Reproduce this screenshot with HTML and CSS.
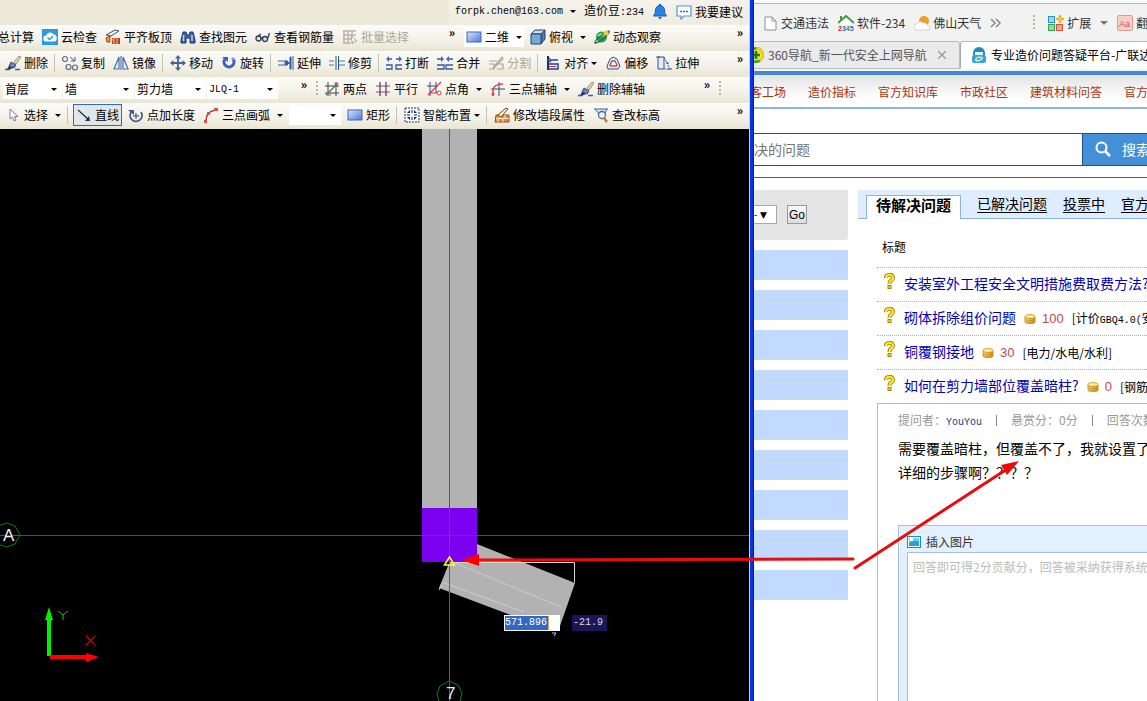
FILE: index.html
```html
<!DOCTYPE html>
<html lang="zh-CN">
<head>
<meta charset="utf-8">
<title>造价问题答疑</title>
<link rel="stylesheet" href="styles.css">
</head>
<body>
<svg class="defs" aria-hidden="true">
  <defs>
    <linearGradient id="gBlue" x1="0" y1="0" x2="1" y2="1"><stop offset="0" stop-color="#dbe8ff"/><stop offset="1" stop-color="#4a78d8"/></linearGradient>
    <linearGradient id="gGold" x1="0" y1="0" x2="1" y2="0"><stop offset="0" stop-color="#fbe38a"/><stop offset="1" stop-color="#d08a10"/></linearGradient>
  </defs>
  <symbol id="cloud" viewBox="0 0 16 16"><rect width="16" height="16" fill="#2a9be0"/><path d="M4.5 12.5a3 3 0 0 1-.3-6 4 4 0 0 1 7.4-.9 3.5 3.5 0 0 1 .4 6.9z" fill="#fff"/><path d="M5.500 8.500l2 2 3.500-3.500" fill="none" stroke="#2a9be0" stroke-width="1.500"/></symbol>
  <symbol id="slab" viewBox="0 0 16 16"><path d="M1 6l9-5 4 1-8 5z" fill="#e8eefc" stroke="#3a5488"/><path d="M1 9l4-2v6H2z" fill="#f0a030" stroke="#8a4a10"/><path d="M7 9h8v6H7z" fill="#b84020"/><path d="M9 9v6M12 9v6M5 11h3" stroke="#ffd080"/></symbol>
  <symbol id="binoc" viewBox="0 0 16 16"><path d="M3 3h3l1 3h2l1-3h3l2 8v3h-5v-5H6v5H1v-3z" fill="#3c62a8" stroke="#1d3768"/><path d="M3.500 6v6M12 6v6" stroke="#b8d0f8" stroke-width="1.500"/></symbol>
  <symbol id="glasses" viewBox="0 0 16 16"><g fill="#dbe6f5" stroke="#333d50" stroke-width="1.300"><circle cx="3.500" cy="9.500" r="2.500"/><circle cx="10" cy="10" r="2.500"/></g><path d="M6 9l2 .5M3 7l3-2M12.500 10l2-6" stroke="#333d50" stroke-width="1.300" fill="none"/></symbol>
  <symbol id="batch" viewBox="0 0 16 16"><path d="M1 2h13M1 6h13M1 10h8M1 14h8M2 1v14M6 1v14M10 1v7" stroke="#b9b6a9" stroke-width="1.400"/><path d="M9 7l6 5-3 .5-1.500 2.500z" fill="#fff" stroke="#a9a698"/></symbol>
  <symbol id="rect" viewBox="0 0 16 16"><rect x="1" y="3" width="14" height="10" fill="url(#gBlue)" stroke="#4068c0"/></symbol>
  <symbol id="cube" viewBox="0 0 16 16"><path d="M1 5l4-4h10l-4 4z" fill="#c2daf2" stroke="#24456f"/><path d="M11 5l4-4v9l-4 5z" fill="#4a7cae" stroke="#24456f"/><path d="M1 5h10v10H1z" fill="#79a8d6" stroke="#24456f"/></symbol>
  <symbol id="orbit" viewBox="0 0 16 16"><circle cx="7.500" cy="8" r="5.500" fill="#22a050"/><path d="M3 7q4-6 8 0-4 1-8 0" fill="#8ce090"/><path d="M1 14Q0 11 14 2q3 0-1 4Q5 14 1 14z" fill="none" stroke="#2b6e48" stroke-width="1.300"/><circle cx="12" cy="4" r="2.500" fill="#f2c840"/></symbol>
  <symbol id="brush" viewBox="0 0 16 16"><path d="M9 7l5-6 2 1-5 7z" fill="#e5d8b8" stroke="#776a50" stroke-width=".7"/><path d="M6 7l5 3-2 3-5-2z" fill="#7084c8" stroke="#334480"/><path d="M4 11l4 2q-3 2-6 1z" fill="#303848"/><path d="M0 14.500h5M10 14.500h5" stroke="#3d59a8" stroke-width="1.500"/></symbol>
  <symbol id="copy" viewBox="0 0 16 16"><g fill="none" stroke="#5c6b88" stroke-width="1.200"><circle cx="3" cy="4" r="2.500"/><circle cx="6.500" cy="12" r="2.500"/><circle cx="13" cy="12.500" r="2.500"/></g><path d="M8 2l5 4M13 2v4H9" fill="none" stroke="#385ca0"/></symbol>
  <symbol id="mirror" viewBox="0 0 16 16"><path d="M6 2v12H1zM10 2v12h5z" fill="#e9f1ff" stroke="#426fae" stroke-width="1.200"/><path d="M8 1v14" stroke="#3c6096"/></symbol>
  <symbol id="move" viewBox="0 0 16 16"><path d="M8 1v14M1 8h14" stroke="#48628c" stroke-width="1.800"/><path d="M8 0l3 3.500H5zM8 16l3-3.500H5zM0 8l3.500-3v6zM16 8l-3.500-3v6z" fill="#48628c"/></symbol>
  <symbol id="rotate" viewBox="0 0 16 16"><path d="M4 4a5 5 0 1 0 8 0" fill="none" stroke="#3c62c0" stroke-width="3"/><path d="M1 2h6v5z" fill="#3c62c0"/><path d="M9 4l3-2 3 3" fill="#8aa8ea"/></symbol>
  <symbol id="extend" viewBox="0 0 16 16"><path d="M0 6h7v4H0M7 8h5" fill="none" stroke="#3c5f9c"/><path d="M8 5l3 3-3 3zM12 2h1v12h-1zM15 1v14" fill="#3159a0" stroke="#3159a0"/></symbol>
  <symbol id="trim" viewBox="0 0 16 16"><path d="M0 6h5M0 10h5M10 6h6M10 10h6" stroke="#467bb8"/><path d="M7 1v14M9.500 1v14" stroke="#27559a"/></symbol>
  <symbol id="split" viewBox="0 0 16 16"><path d="M0 10h6v4H0M16 10h-6v4h6M1 4h5M10 4h5" fill="none" stroke="#355a9a" stroke-width="1.300"/><path d="M3 1L0 4l3 3zM13 1l3 3-3 3z" fill="#4169b4"/></symbol>
  <symbol id="merge" viewBox="0 0 16 16"><path d="M0 10h7v4H0M16 10H9v4h7M0 4h5M11 4h5" fill="none" stroke="#355a9a" stroke-width="1.300"/><path d="M4 1l3 3-3 3zM12 1L9 4l3 3z" fill="#4169b4"/></symbol>
  <symbol id="cut" viewBox="0 0 16 16"><path d="M1 6h8M1 9h5v5H1M9 9h6v5H9M5 13L14 2l1 2-8 8z" fill="none" stroke="#aaa79b" stroke-width="1.200"/></symbol>
  <symbol id="align" viewBox="0 0 16 16"><path d="M3 1v14" stroke="#183070" stroke-width="2"/><path d="M5 5h8M5 3l-2 2 3 2" stroke="#26429a" fill="none" stroke-width="1.500"/><path d="M4 9h9v5H4" fill="#dfe8ff" stroke="#26429a" stroke-width="1.500"/><path d="M4 11.500h7" stroke="#e03040"/></symbol>
  <symbol id="offset" viewBox="0 0 16 16"><path d="M2 11l3-7 3-2 4 2 3 7-2 3H3z" fill="#e3eaf7" stroke="#3f5380"/><path d="M5 10l2-4h3l2 4-1 1H6z" fill="#fff" stroke="#c84a58" stroke-width="1.500"/></symbol>
  <symbol id="stretch" viewBox="0 0 16 16"><path d="M2 2h6v12H2z" fill="#e4ecfa" stroke="#37558c"/><path d="M8 2l6 12H8" fill="none" stroke="#37558c" stroke-dasharray="2 1"/><path d="M0 2h4M10 8h3M12 14h4" stroke="#37558c"/></symbol>
  <symbol id="twopt" viewBox="0 0 16 16"><path d="M1 5h14M1 12h14M4 1v14M12 1v14" stroke="#3b4468"/><path d="M2 14L14 2" stroke="#3f8a48" stroke-width="1.500"/><path d="M3 12h3v3M10 3h3v3" fill="none" stroke="#c65a30"/></symbol>
  <symbol id="parallel" viewBox="0 0 16 16"><path d="M1 5h14M1 11h14" stroke="#a84860" stroke-width="1.200"/><path d="M5 1v14M11 1v14" stroke="#39436c" stroke-width="1.200"/></symbol>
  <symbol id="angle" viewBox="0 0 16 16"><path d="M1 5h11M4 1v14M10 1v11" stroke="#3b4a80"/><path d="M2 14L15 1M4 12h9" stroke="#cf3a48" stroke-width="1.200"/><circle cx="13" cy="12" r="2" fill="#fff" stroke="#cf3a48"/></symbol>
  <symbol id="threeaxis" viewBox="0 0 16 16"><path d="M1 8h14M9 1v14" stroke="#344a88"/><path d="M3 15V9q1-6 10-6" fill="none" stroke="#d14448" stroke-width="1.400"/><circle cx="3" cy="13" r="1.500" fill="#d14448"/></symbol>
  <symbol id="cursor" viewBox="0 0 16 16"><path d="M5 2v10l2.500-2 1.500 4 2-1-1.500-3.500H13z" fill="#fff" stroke="#777e90"/></symbol>
  <symbol id="line" viewBox="0 0 16 16"><path d="M2 3l10 9" stroke="#1e2f5e" stroke-width="1.300"/><path d="M14 14H9l4-5z" fill="#1e2f5e"/></symbol>
  <symbol id="ptlen" viewBox="0 0 16 16"><path d="M4 4a6 6 0 1 0 9 1" fill="none" stroke="#40598c" stroke-width="1.700"/><path d="M0 3h6v5z" fill="#40598c"/><path d="M8 6v6M5 9h6" stroke="#2f4166"/></symbol>
  <symbol id="arc" viewBox="0 0 16 16"><path d="M3 14Q3 4 13 3" fill="none" stroke="#7c4454" stroke-width="1.400"/><path d="M11 1h4v3h-4zM4 5h3v3H4zM1 13h3v3H1z" fill="#d95046"/></symbol>
  <symbol id="smart" viewBox="0 0 16 16"><rect x="1" y="1" width="14" height="14" fill="#f2f7ff" stroke="#26395f" stroke-dasharray="2 1"/><path d="M3 8h3M10 8h3M8 3v3M8 10v3" stroke="#182848"/><path d="M6 3v3H3zM10 3v3h3zM6 13v-3H3zM10 13v-3h3z" fill="#182848"/></symbol>
  <symbol id="wall" viewBox="0 0 16 16"><path d="M2 8h13v7H1z" fill="#e28a42" stroke="#9a4e1e"/><path d="M2 11.500h13M6 8v3M11 8v3M4 12v3M9 12v3" stroke="#ffe6bd"/><path d="M4 8L12 1l2 1-7 8z" fill="#fff0c8" stroke="#594830"/></symbol>
  <symbol id="checkh" viewBox="0 0 16 16"><path d="M1 2h14M2 2l5 6h4l3-6" fill="#d7e7ff" stroke="#3f62a0"/><circle cx="9" cy="8" r="3.500" fill="#edf5ff" stroke="#51698f" stroke-width="1.300"/><path d="M11 11l3 4" stroke="#bd7840" stroke-width="2.500"/></symbol>
  <symbol id="bell" viewBox="0 0 16 16"><path d="M1.500 12q2-2 2-6a4.500 4.500 0 0 1 9 0q0 4 2 6z" fill="#2684e6" stroke="#1760b8"/><path d="M6 13h4l-2 2.500zM7 0h2v2H7z" fill="#1760b8"/></symbol>
  <symbol id="bubble" viewBox="0 0 16 16"><path d="M1 2h14v10H8l-3 3v-3H1z" fill="#fff" stroke="#4c95d8" stroke-width="1.200"/><path d="M4 7.500h2M7 7.500h2M10 7.500h2" stroke="#2d78c4" stroke-width="1.500"/></symbol>
  <symbol id="file" viewBox="0 0 16 16"><path d="M3 2h7l4 4v9H3z" fill="#fff" stroke="#8e8e8e"/><path d="M10 2v4h4" fill="none" stroke="#8e8e8e"/></symbol>
  <symbol id="weather" viewBox="0 0 16 16"><circle cx="10" cy="6" r="5" fill="#f59a26"/><path d="M3 15a3 3 0 0 1 0-6 3.500 3.500 0 0 1 6-1 3 3 0 0 1 4 2 2.500 2.500 0 0 1 0 5z" fill="#fff" stroke="#c7ccd4" stroke-width=".8"/></symbol>
  <symbol id="tiles" viewBox="0 0 16 16"><rect x=".5" y="1.500" width="6" height="6" fill="#9ed4f4" stroke="#2a90cc"/><rect x=".5" y="9.500" width="6" height="6" fill="#8edb9c" stroke="#30a850"/><rect x="8.500" y="9.500" width="6" height="6" fill="#f7a294" stroke="#d8513c"/><path d="M12 0l1.300 3L16 4l-2.700 1.200L12 8l-1.300-2.800L8 4l2.700-1z" fill="#ffd02a" stroke="#dd9a10" stroke-width=".8"/></symbol>
  <symbol id="plus360" viewBox="0 0 16 16"><circle cx="8" cy="8" r="8" fill="#2f9c2a"/><path d="M8 0a8 8 0 0 1 8 8 8 8 0 0 1-4 7z" fill="#e9d416"/><circle cx="8" cy="8" r="5.500" fill="#f3e32c"/><path d="M8 4v8M4 8h8" stroke="#1c7a20" stroke-width="2.500"/></symbol>
  <symbol id="expert" viewBox="0 0 16 16"><path d="M2 6a6 6 0 0 1 12 0v2H2z" fill="#2688bc"/><path d="M4 5h8v3H4z" fill="#d9f2fc"/><rect x="1" y="8" width="14" height="8" rx="2" fill="#39a6d8"/><path d="M5 14q-1-3 3-4 4 0 3 2-3 2-6 2" fill="none" stroke="#fff" stroke-width="1.200"/></symbol>
  <symbol id="lens" viewBox="0 0 16 16"><circle cx="6.500" cy="6.500" r="5" fill="none" stroke="#fff" stroke-width="2"/><path d="M10 10l5 5" stroke="#fff" stroke-width="2.500"/></symbol>
  <symbol id="ask" viewBox="0 0 12 16"><path d="M2.500 5a3.500 3 0 1 1 5 2.500Q6 8.500 6 11" fill="none" stroke="#a88300" stroke-width="4"/><path d="M4 12h4v4H4z" fill="#a88300"/><path d="M2.500 5a3.500 3 0 1 1 5 2.500Q6 8.500 6 11" fill="none" stroke="#ffe52c" stroke-width="2.200"/><path d="M5 13h2v2H5z" fill="#ffd21c"/></symbol>
  <symbol id="coin" viewBox="0 0 12 10"><path d="M1 2.500v5.500c0 2.500 10 2.500 10 0V2.500z" fill="url(#gGold)" stroke="#c98a18" stroke-width=".8"/><ellipse cx="6" cy="2.500" rx="5" ry="2" fill="#fff0a0" stroke="#c98a18" stroke-width=".8"/><path d="M1 5c0 2 10 2 10 0M1 7c0 2 10 2 10 0" fill="none" stroke="#c98a18" stroke-width=".8"/></symbol>
  <symbol id="pic" viewBox="0 0 14 12"><rect x=".5" y=".5" width="13" height="11" fill="#fff" stroke="#1d8cc0"/><rect x="2" y="2" width="10" height="8" fill="#6fd0f0"/><path d="M2 7q5-4 10-1v4H2z" fill="#27a2d6"/><path d="M3 2v3h3V2" fill="#fff"/></symbol>
</svg>

<div class="screen">
  <section class="cad" aria-label="绘图软件">
    <header class="toolbars">
      <div class="account">
        <div class="account-box">
          <button class="tool"><span class="mono">forpk.chen@163.com</span><i class="caret"></i></button>
          <span class="beans">造价豆<span class="mono">:234</span></span>
          <button class="tool" aria-label="通知"><svg class="ic"><use href="#bell"/></svg></button>
          <button class="tool"><svg class="ic"><use href="#bubble"/></svg>我要建议</button>
        </div>
      </div>

      <div class="row row-view">
        <div class="bar bar-cut">
          <button class="tool">总计算</button>
          <button class="tool"><svg class="ic"><use href="#cloud"/></svg>云检查</button>
          <button class="tool"><svg class="ic"><use href="#slab"/></svg>平齐板顶</button>
          <button class="tool"><svg class="ic"><use href="#binoc"/></svg>查找图元</button>
          <button class="tool"><svg class="ic"><use href="#glasses"/></svg>查看钢筋量</button>
          <button class="tool" disabled><svg class="ic"><use href="#batch"/></svg>批量选择</button>
          <button class="more" aria-label="更多">»</button>
        </div>
        <div class="bar">
          <button class="tool white"><svg class="ic"><use href="#rect"/></svg>二维<i class="caret"></i></button>
          <button class="tool"><svg class="ic"><use href="#cube"/></svg>俯视<i class="caret"></i></button>
          <button class="tool"><svg class="ic"><use href="#orbit"/></svg>动态观察</button>
          <button class="more" aria-label="更多">»</button>
        </div>
      </div>

      <div class="row">
        <div class="bar">
          <button class="tool"><svg class="ic"><use href="#brush"/></svg>删除</button>
          <i class="sep"></i>
          <button class="tool"><svg class="ic"><use href="#copy"/></svg>复制</button>
          <button class="tool"><svg class="ic"><use href="#mirror"/></svg>镜像</button>
          <i class="sep"></i>
          <button class="tool"><svg class="ic"><use href="#move"/></svg>移动</button>
          <button class="tool"><svg class="ic"><use href="#rotate"/></svg>旋转</button>
          <i class="sep"></i>
          <button class="tool"><svg class="ic"><use href="#extend"/></svg>延伸</button>
          <button class="tool"><svg class="ic"><use href="#trim"/></svg>修剪</button>
          <i class="sep"></i>
          <button class="tool"><svg class="ic"><use href="#split"/></svg>打断</button>
          <button class="tool"><svg class="ic"><use href="#merge"/></svg>合并</button>
          <button class="tool" disabled><svg class="ic"><use href="#cut"/></svg>分割</button>
          <i class="sep"></i>
          <button class="tool"><svg class="ic"><use href="#align"/></svg>对齐<i class="caret near"></i></button>
          <button class="tool"><svg class="ic"><use href="#offset"/></svg>偏移</button>
          <button class="tool"><svg class="ic"><use href="#stretch"/></svg>拉伸</button>
          <button class="more" aria-label="更多">»</button>
        </div>
      </div>

      <div class="row row-axis">
        <div class="bar bar-combos">
          <label class="combo first"><select aria-label="楼层"><option>首层</option></select></label>
          <label class="combo"><select aria-label="构件类型"><option>墙</option></select></label>
          <label class="combo"><select aria-label="构件类别"><option>剪力墙</option></select></label>
          <label class="combo"><select class="mono" aria-label="构件名称"><option>JLQ-1</option></select></label>
          <button class="more" aria-label="更多">»</button>
        </div>
        <div class="bar">
          <i class="grip"></i>
          <button class="tool"><svg class="ic"><use href="#twopt"/></svg>两点</button>
          <button class="tool"><svg class="ic"><use href="#parallel"/></svg>平行</button>
          <button class="tool"><svg class="ic"><use href="#angle"/></svg>点角<i class="caret"></i></button>
          <button class="tool"><svg class="ic"><use href="#threeaxis"/></svg>三点辅轴<i class="caret"></i></button>
          <button class="tool"><svg class="ic"><use href="#brush"/></svg>删除辅轴</button>
          <button class="more" aria-label="更多">»</button>
        </div>
        <div class="bar"><i class="grip"></i></div>
      </div>

      <div class="row">
        <div class="bar">
          <button class="tool"><svg class="ic"><use href="#cursor"/></svg>选择<i class="caret"></i></button>
          <i class="sep"></i>
          <button class="tool pressed" aria-pressed="true"><svg class="ic"><use href="#line"/></svg>直线</button>
          <button class="tool"><svg class="ic"><use href="#ptlen"/></svg>点加长度</button>
          <button class="tool"><svg class="ic"><use href="#arc"/></svg>三点画弧<i class="caret"></i></button>
          <label class="combo small"><select aria-label="画弧方式"><option></option></select></label>
          <button class="tool"><svg class="ic"><use href="#rect"/></svg>矩形</button>
          <i class="sep"></i>
          <button class="tool"><svg class="ic"><use href="#smart"/></svg>智能布置<i class="caret near"></i></button>
          <i class="sep"></i>
          <button class="tool"><svg class="ic"><use href="#wall"/></svg>修改墙段属性</button>
          <button class="tool"><svg class="ic"><use href="#checkh"/></svg>查改标高</button>
          <button class="more" aria-label="更多">»</button>
        </div>
      </div>
    </header>

    <div class="canvas">
      <svg class="drawing" width="749" height="572" viewBox="0 129 749 572">
        <path d="M422 129h55v379h-55z" fill="#b2b2b2"/>
        <path d="M477 544l98 39-15 43h-20l-101-38 11-27 27 1z" fill="#b2b2b2"/>
        <path d="M422 508h55v54h-55z" fill="#7b00f0"/>
        <path d="M455 563l106 44M444 583l80 29" stroke="#ccc" fill="none"/>
        <rect x="0" y="535" width="749" height="1" fill="#e01010"/>
        <rect x="449" y="129" width="1" height="406" fill="#ff1010"/>
        <rect x="449" y="535" width="1" height="166" fill="#109020"/>
        <path d="M450 562.500h124.500v20" stroke="#ddd5bd" fill="none"/>
        <path d="M439 590l3-7M552 633h4l-2 3" stroke="#ccc" fill="none"/>
        <path d="M449.500 557l-5 8h10z" fill="none" stroke="#ffff20" stroke-width="1.500"/>
        <path d="M0 525l7-2 8 3 5 9-5 9-8 3-7-2" fill="none" stroke="#187828"/>
        <path d="M437 694l3-8 9-5 9 4 4 8-2 8M437 694l2 7" fill="none" stroke="#187828"/>
        <text x="3" y="541" class="axis-label">A</text>
        <text x="446" y="699" class="axis-label">7</text>
        <path d="M49 656v-38" stroke="#00f000" stroke-width="4"/>
        <path d="M49 607l4 13h-8z" fill="#00f000"/>
        <path d="M50 657h38" stroke="#f00" stroke-width="4"/>
        <path d="M99 657l-13-4v9z" fill="#f00"/>
        <path d="M58 611l5 4 5-4M63 615v5" stroke="#20c020" fill="none"/>
        <path d="M86 636l9 9M95 636l-9 9" stroke="#e01010"/>
      </svg>
      <input class="dim dim-length" aria-label="长度" value="571.896">
      <output class="dim dim-angle">-21.9</output>
    </div>
  </section>

  <div class="divider"></div>

  <section class="browser" aria-label="浏览器">
    <div class="bookmarks">
      <a href="#"><svg class="ic"><use href="#file"/></svg>交通违法</a>
      <a href="#"><svg class="ic" viewBox="0 0 16 16"><path d="M0 8l8-7 8 7" fill="none" stroke="#3f9c40" stroke-width="2"/><path d="M3 1v4" stroke="#3f9c40" stroke-width="2"/><path d="M3 7l5-4 5 4v3H3z" fill="#fff"/><text x="0" y="16" class="icon-num"><tspan fill="#d22">2</tspan><tspan fill="#286fd0">3</tspan><tspan fill="#2a9a3c">4</tspan><tspan fill="#286fd0">5</tspan></text></svg>软件-234</a>
      <a href="#"><svg class="ic"><use href="#weather"/></svg>佛山天气</a>
      <button class="chevrons" aria-label="更多书签"><svg width="12" height="10" viewBox="0 0 12 10"><path d="M1 1l4 4-4 4M6 1l4 4-4 4" fill="none" stroke="#8a8a8a" stroke-width="1.500"/></svg></button>
      <i class="grip"></i>
      <a href="#" class="ext"><svg class="ic"><use href="#tiles"/></svg>扩展<i class="caret grey"></i></a>
      <a href="#"><svg class="ic" viewBox="0 0 16 16"><rect x=".5" y=".5" width="15" height="15" rx="1.500" fill="#f6cfca" stroke="#e09a92"/><text x="2" y="12" class="icon-aa">Aa</text></svg>翻译</a>
    </div>
    <div class="tabs">
      <div class="tab"><svg class="ic"><use href="#plus360"/></svg><span>360导航_新一代安全上网导航</span><button class="close" aria-label="关闭"><svg width="8" height="8" viewBox="0 0 8 8"><path d="M0 0l8 8M8 0L0 8" stroke="#999" stroke-width="1.300"/></svg></button></div>
      <div class="tab active"><svg class="ic"><use href="#expert"/></svg><span>专业造价问题答疑平台-广联达</span></div>
    </div>
    <nav class="sitenav">
      <a href="#">客工场</a><a href="#">造价指标</a><a href="#">官方知识库</a><a href="#">市政社区</a><a href="#">建筑材料问答</a><a href="#">官方</a>
    </nav>
    <form class="search">
      <input type="text" placeholder="决的问题" aria-label="搜索问题">
      <button type="button"><svg class="ic"><use href="#lens"/></svg>搜索</button>
    </form>
    <div class="content">
      <aside class="side">
        <div class="jump">
          <select aria-label="分类"><option>-&nbsp;▼</option></select>
          <button>Go</button>
        </div>
        <ul class="bars"><li></li><li></li><li></li><li></li><li></li><li></li><li></li><li></li><li></li></ul>
      </aside>
      <main class="questions">
        <div class="qtabs">
          <a href="#" class="current">待解决问题</a><a href="#">已解决问题</a><a href="#">投票中</a><a href="#">官方</a>
        </div>
        <div class="qbody">
          <div class="qhead">标题</div>
          <ul class="qlist">
            <li><svg class="ask"><use href="#ask"/></svg><a href="#">安装室外工程安全文明措施费取费方法?</a></li>
            <li><svg class="ask"><use href="#ask"/></svg><a href="#">砌体拆除组价问题</a><svg class="coin"><use href="#coin"/></svg><b>100</b><span>[计价<span class="mono">GBQ4.0(</span>安装</span></li>
            <li><svg class="ask"><use href="#ask"/></svg><a href="#">铜覆钢接地</a><svg class="coin"><use href="#coin"/></svg><b>30</b><span>[电力/水电/水利]</span></li>
            <li><svg class="ask"><use href="#ask"/></svg><a href="#">如何在剪力墙部位覆盖暗柱?</a><svg class="coin"><use href="#coin"/></svg><b>0</b><span>[钢筋</span></li>
          </ul>
          <article class="detail">
            <div class="meta"><span>提问者：<a href="#" class="mono">YouYou</a></span><i></i><span>悬赏分：0分</span><i></i><span>回答次数</span></div>
            <p>需要覆盖暗柱，但覆盖不了，我就设置了<br>详细的步骤啊？？？？</p>
            <div class="editor">
              <button class="insert"><svg class="pic"><use href="#pic"/></svg>插入图片</button>
              <textarea aria-label="回答" placeholder="回答即可得2分贡献分，回答被采纳获得系统" wrap="off"></textarea>
            </div>
          </article>
        </div>
      </main>
    </div>
  </section>

  <svg class="arrows" width="1147" height="701" viewBox="0 0 1147 701" aria-hidden="true">
    <path d="M474 560L853 559M855 568L1004 471" stroke="#e80c10" stroke-width="3" stroke-linecap="round"/>
    <path d="M461 560l18-6v12zM1019 461l-12 14-6-10z" fill="#f00"/>
  </svg>
</div>
</body>
</html>
```
FILE: styles.css
```css
* { box-sizing: border-box; }

body {
  margin: 0;
  font: 12px/16px "Noto Sans CJK SC", sans-serif;
  color: #000;
  background: #fff;
}

button, input, select, textarea {
  font: inherit;
  color: inherit;
  margin: 0;
  padding: 0;
  border: 0;
  border-radius: 0;
  background: none;
  outline: 0;
}

select { appearance: none; }
ul { margin: 0; padding: 0; list-style: none; }
a { color: inherit; text-decoration: none; }
.defs { position: absolute; width: 0; height: 0; }
.ic { width: 16px; height: 16px; flex: none; }
.mono { font-family: "Liberation Mono", "Noto Sans CJK SC", monospace; font-size: 10px; }
.icon-num { font: bold 7px "Liberation Sans", sans-serif; }
.icon-aa { font: 9px "Liberation Sans", sans-serif; fill: #c0605c; }

.screen {
  position: relative;
  display: grid;
  grid-template-columns: minmax(0, 749fr) 5px minmax(0, 393fr);
  height: 100vh;
  overflow: hidden;
}

/* Drawing application */
.cad { display: flex; flex-direction: column; min-height: 0; }
.toolbars { background: #ece9d8; }

.account { display: flex; justify-content: flex-end; height: 25px; }
.account-box {
  display: flex;
  align-items: center;
  gap: 4px;
  width: 300px;
  padding: 0 4px 2px;
  white-space: nowrap;
  background: linear-gradient(#f4f2ea, #efecdf);
}
.beans { flex: 1; padding-left: 2px; }

.row { display: grid; grid-template-columns: 1fr; height: 26px; white-space: nowrap; }
.row-view { grid-template-columns: 461fr 288fr; }
.row-axis { grid-template-columns: 313fr 403fr 33fr; }

.bar {
  display: flex;
  align-items: center;
  gap: 4px;
  min-width: 0;
  padding: 0 4px 2px 3px;
  overflow: hidden;
  background: linear-gradient(#fcfbf8, #f3f1e7 60%, #e9e5d2);
}
.bar-cut { padding-left: 0; }
.bar-cut > .tool:first-child { padding-left: 0; margin-left: -2px; }
.bar-combos { gap: 1px; }

.tool {
  display: flex;
  align-items: center;
  gap: 3px;
  flex: none;
  height: 20px;
  padding: 0 2px;
}
.tool:disabled { color: #aca899; }
.tool.white { background: #fff; }
.tool.pressed { height: 22px; border: 1px solid #316ac5; background: #e1e6e8; }

.caret {
  margin-left: 4px;
  border: 3px solid transparent;
  border-top-color: #000;
  border-bottom: 0;
}
.caret.near { margin-left: 0; }
.caret.grey { border-width: 4px 4px 0; border-top-color: #777; }

.sep { width: 1px; height: 18px; margin-right: 1px; background: #c5c2b2; flex: none; }
.grip { width: 2px; height: 16px; flex: none; background: repeating-linear-gradient(#b9b5a5 0 2px, transparent 2px 4px); }
.more { margin-left: auto; align-self: flex-start; flex: none; font-weight: bold; width: 10px; line-height: 14px; }

.combo { position: relative; flex: none; width: 71px; height: 20px; background: #fff; }
.combo.first { width: 59px; }
.combo.small { width: 52px; }
.combo select { width: 100%; height: 20px; padding: 0 14px 0 2px; }
.combo::after {
  content: "";
  position: absolute;
  right: 5px;
  top: 9px;
  border: 3px solid transparent;
  border-top-color: #000;
  border-bottom: 0;
}

.canvas { position: relative; flex: 1; min-height: 0; overflow: hidden; background: #000; }
.drawing { display: block; }
.axis-label { font: 17px "Liberation Sans", sans-serif; fill: #eee; }
.dim { position: absolute; top: 486px; height: 16px; font: 10px/16px "Liberation Mono", monospace; }
.dim-length {
  left: 504px;
  width: 56px;
  color: #fff;
  border: 1px solid #fff;
  background: linear-gradient(90deg, #316ac5 43px, #d8a860 43px 44px, #fff 44px);
}
.dim-angle { left: 572px; width: 35px; padding-left: 1px; color: #d8d8f0; background: #1b1757; }

.divider { border-left: 1px solid #c4cdf0; background: linear-gradient(90deg, #0a3be6, #0831d9 60%, #001a90); }

/* Browser */
.browser { display: flex; flex-direction: column; min-width: 0; overflow: hidden; white-space: nowrap; background: #fff; }

.bookmarks {
  display: flex;
  align-items: center;
  gap: 9px;
  height: 41px;
  padding: 2px 0 0 8px;
  color: #333;
  background: #f2f2f2;
  border-top: 3px solid #fafafa;
  box-shadow: inset 0 1px #b8b8b8;
}
.bookmarks a { display: flex; align-items: center; gap: 3px; flex: none; }
.bookmarks .grip { margin: 0 4px 0 22px; }
.bookmarks .ext .caret { margin-left: 6px; }
.chevrons { display: flex; }

.tabs { display: flex; height: 30px; background: #f2f2f2; }
.tab {
  display: flex;
  align-items: center;
  gap: 4px;
  flex: none;
  height: 28px;
  color: #555;
  background: #ebebeb;
  border: 1px solid #bbb;
  border-width: 1px 1px 1px 0;
  border-radius: 0 3px 0 0;
  width: 206px;
}
.tab:first-child .ic { margin-left: -6px; }
.close { display: flex; margin: 0 13px 0 auto; }
.tab.active { flex: 1; padding-left: 10px; color: #000; background: #fff; border-bottom-color: #fff; border-left: 1px solid #aaa; border-radius: 3px 0 0 0; }

.sitenav {
  display: flex;
  align-items: center;
  gap: 22px;
  height: 38px;
  padding-top: 2px;
  color: #a83410;
  background: linear-gradient(#e4e4e4, #fff 75%);
  border-top: 4px solid #448ad2;
  border-bottom: 2px solid #8fb3e6;
}
.sitenav a { flex: none; }
.sitenav a:first-child { margin-left: -4px; }

.search { display: flex; height: 33px; margin-top: 24px; font-size: 14px; }
.search input { flex: 1; min-width: 0; border: 1px solid #1a4f94; border-width: 1px 0; padding-bottom: 2px; }
.search input::placeholder { color: #757575; opacity: 1; }
.search button {
  display: flex;
  align-items: center;
  gap: 11px;
  width: 65px;
  padding: 0 0 2px 12px;
  overflow: hidden;
  flex: none;
  color: #fff;
  background: #4490d8;
  border: 1px solid #1a4f94;
  border-right: 0;
}

.content {
  display: grid;
  grid-template-columns: 94px minmax(0, 1fr);
  gap: 10px;
  flex: 1;
  min-height: 0;
  margin-top: 11px;
  padding-top: 12px;
  border-top: 1px solid #5c5c68;
}
.jump { display: flex; align-items: flex-start; gap: 10px; height: 50px; padding-top: 15px; background: #e4e4e4; border-radius: 0 0 3px 0; }
.jump select { width: 23px; height: 19px; background: #fff; border: 1px solid #aaa; border-left: 0; font: 9px "DejaVu Sans", sans-serif; }
.jump button { width: 20px; height: 19px; font: 12px "Liberation Sans", sans-serif; border: 1px solid #999; background: linear-gradient(#f8f8f8, #ddd); }
.bars { display: grid; gap: 10px; margin-top: 10px; }
.bars li { height: 30px; background: #c2daff; }

.questions { display: flex; flex-direction: column; min-height: 0; }
.qtabs {
  display: flex;
  align-items: flex-end;
  gap: 16px;
  flex: none;
  height: 29px;
  padding-left: 8px;
  font-size: 14px;
  line-height: 20px;
  background: #deedff;
  box-shadow: inset 0 -1px #8db4dc;
}
.qtabs a { padding-bottom: 6px; text-decoration: underline; text-underline-offset: 3px; flex: none; }
.qtabs .current {
  padding: 0 9px 5px;
  font-size: 15px;
  line-height: 18px;
  font-weight: bold;
  text-decoration: none;
  background: #fff;
  border: 1px solid #8db4dc;
  border-bottom: 0;
}
.qbody { display: flex; flex-direction: column; flex: 1; min-height: 0; padding-left: 19px; }
.qhead { flex: none; padding: 20px 5px 12px; }
.qlist { flex: none; }
.qlist li {
  display: flex;
  align-items: center;
  gap: 8px;
  height: 34px;
  padding-left: 6px;
  border-top: 1px dotted #b0b0b0;
}
.qlist a { padding-bottom: 4px; font-size: 14px; color: #0000b4; }
.qlist b { font: 13px "Liberation Sans", sans-serif; color: #c84848; margin-left: -2px; }
.qlist .mono { line-height: 12px; }
.ask { width: 13px; height: 16px; align-self: flex-start; margin-top: 5px; flex: none; }
.coin { width: 12px; height: 10px; flex: none; }

.detail { display: flex; flex-direction: column; flex: 1; min-height: 0; padding: 8px 0 0 20px; border: 1px solid #bbb; border-width: 1px 0 0 1px; }
.meta { display: flex; align-items: center; gap: 14px; height: 16px; color: #999; }
.meta a { color: #1c3a78; line-height: 12px; }
.meta i { flex: none; width: 1px; height: 11px; background: #888; }
.detail p { margin: 8px 0 41px; font-size: 14px; line-height: 24px; }
.editor { display: flex; flex-direction: column; flex: 1; min-height: 0; padding-left: 8px; background: #e3f0ff; border: 1px solid #a4c0e2; border-width: 1px 0 0 1px; }
.insert { display: flex; align-items: center; gap: 5px; height: 26px; padding-top: 6px; color: #333; flex: none; }
.pic { width: 14px; height: 12px; flex: none; }
.editor textarea { flex: 1; width: 100%; min-height: 0; padding: 6px 5px; resize: none; overflow: hidden; background: #fff; border: 1px solid #a4c0e2; border-width: 1px 0 0 1px; }
.editor textarea::placeholder { color: #bbb; opacity: 1; }

/* Annotation arrows over both windows */
.arrows { position: absolute; left: 0; top: 0; pointer-events: none; }
```
